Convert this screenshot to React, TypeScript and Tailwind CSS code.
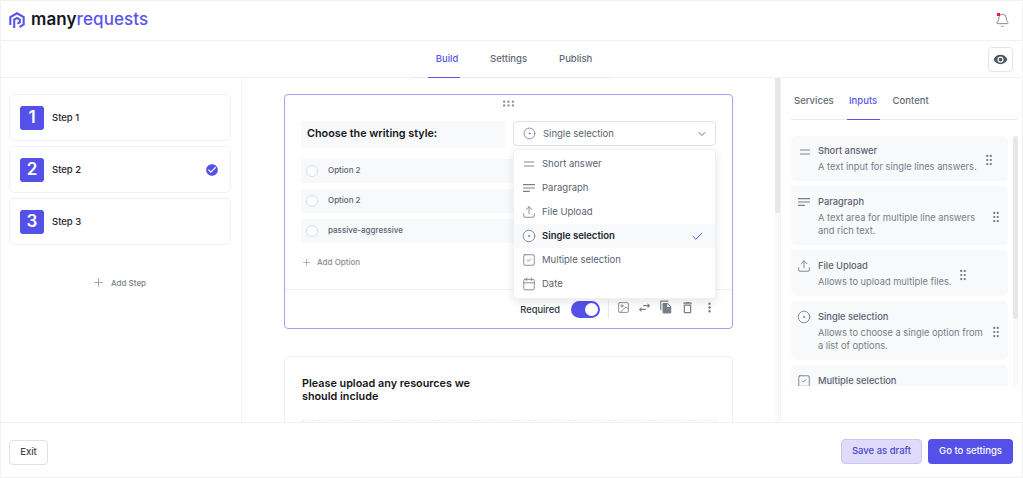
import { Bell, Calendar, Check, ChevronDown, CircleDot, Equal, GripHorizontal, GripVertical, Image, Plus, SquareCheck, Upload } from "lucide-react";
import { MdCheckCircle, MdFileCopy, MdMoreVert, MdOutlineDelete, MdOutlineSwapHoriz, MdRemoveRedEye } from "react-icons/md";
import type { ReactNode } from "react";

function ParagraphIcon({ className }: { className?: string }) {
  return (
    <svg viewBox="0 0 14 14" fill="none" stroke="currentColor" strokeWidth="1.3" className={className}>
      <path d="M0 3h14M0 7h14M0 11h8" />
    </svg>
  );
}

function Logo() {
  return (
    <svg viewBox="0 0 16 17" className="w-4 h-[17px]" fill="none" stroke="#5a55ea" strokeWidth="2.1">
      <path d="M1.3 13V5.2L8 1.3l6.7 3.9v7.3l-4.2 2.6" />
      <path d="M5.2 16V7.6L8 5.9l2.8 1.7v2.7L8.4 11.7" />
    </svg>
  );
}

const menuItems: { label: string; icon: ReactNode; selected?: boolean }[] = [
  { label: "Short answer", icon: <Equal className="w-4 h-4" strokeWidth={1.4} /> },
  { label: "Paragraph", icon: <ParagraphIcon className="w-3 h-[14px]" /> },
  { label: "File Upload", icon: <Upload className="w-[14px] h-[14px]" strokeWidth={1.5} /> },
  { label: "Single selection", icon: <CircleDot className="w-[14px] h-[14px]" strokeWidth={1.5} />, selected: true },
  { label: "Multiple selection", icon: <SquareCheck className="w-[14px] h-[14px]" strokeWidth={1.5} /> },
  { label: "Date", icon: <Calendar className="w-[14px] h-[14px]" strokeWidth={1.5} /> },
];

const inputs: { title: string; desc?: ReactNode; icon: ReactNode; grip?: string; h: string; pt: string }[] = [
  { title: "Short answer", desc: "A text input for single lines answers.", icon: <Equal className="w-4 h-4" strokeWidth={1.4} />, grip: "ml-[5px]", h: "h-[45px]", pt: "pt-2" },
  { title: "Paragraph", desc: <>A text area for multiple line answers<br />and rich text.</>, icon: <ParagraphIcon className="w-3 h-[14px] ml-[1px]" />, grip: "ml-[14px]", h: "h-[59px]", pt: "pt-[9px]" },
  { title: "File Upload", desc: "Allows to upload multiple files.", icon: <Upload className="w-[14px] h-[14px]" strokeWidth={1.5} />, grip: "ml-[5px]", h: "h-[46px]", pt: "pt-[9px]" },
  { title: "Single selection", desc: <>Allows to choose a single option from<br />a list of options.</>, icon: <CircleDot className="w-[14px] h-[14px]" strokeWidth={1.5} />, grip: "ml-[6px]", h: "h-[59px]", pt: "pt-[9px]" },
  { title: "Multiple selection", icon: <SquareCheck className="w-[14px] h-[14px]" strokeWidth={1.5} />, h: "h-[59px]", pt: "pt-[9px]" },
];

function StepCard({ n, active }: { n: number; active?: boolean }) {
  return (
    <div className="h-[47px] rounded-md border border-[#eff0f2] flex items-center pl-[10px] pr-[11px] bg-white">
      <div className="w-6 h-6 rounded-[3px] bg-[#5450e8] text-white text-[17px] font-semibold flex items-center justify-center">{n}</div>
      <span className="ml-2 mt-[2px] text-[9.5px] font-medium text-[#1f2430]">Step {n}</span>
      {active && <MdCheckCircle className="ml-auto w-[14px] h-[14px] text-[#5450e8]" />}
    </div>
  );
}

function OptionRow({ label }: { label: string }) {
  return (
    <div className="h-6 bg-[#f8f9fa] flex items-center pl-[5px]">
      <span className="w-[12px] h-[12px] rounded-full border border-[#d9dce1] bg-white" />
      <span className="ml-[10px] text-[8px] font-medium -translate-y-[1px] text-[#5b6270]">{label}</span>
    </div>
  );
}

export default function App() {
  return (
    <div className="w-[1023px] h-[478px] flex flex-col overflow-hidden bg-white border border-[#f0f1f3] font-['Inter',sans-serif] text-[#4b5563]">
      <header className="h-[40px] shrink-0 flex items-center pl-2 pr-[12px] border-b border-[#f0f1f3]">
        <Logo />
        <span className="ml-[6px] text-[17px] leading-none font-semibold tracking-[0.1px] -translate-y-[1px]">
          <span className="text-[#14161c]">many</span>
          <span className="text-[#5a55ea] font-medium">requests</span>
        </span>
        <span className="ml-auto relative">
          <Bell className="w-[15px] h-[15px] text-[#6b7280]" strokeWidth={1.3} />
          <span className="absolute top-0 left-[2px] w-[3px] h-[3px] bg-[#e5202e]" />
        </span>
      </header>

      <div className="h-[37px] shrink-0 relative flex justify-center items-stretch pr-[1px] border-b border-[#f0f1f3]">
        <nav className="w-[198px] flex border-b border-[#e5e7eb] text-[9.5px] font-medium -mb-[1px]">
          <span className="ml-4 w-8 pl-[6px] flex items-center justify-center text-[#5a55ea] border-b-[1.5px] border-[#5a55ea] -mb-[1px]">Build</span>
          <span className="ml-[30px] flex items-center text-[#626975]">Settings</span>
          <span className="ml-[32px] flex items-center text-[#626975]">Publish</span>
        </nav>
        <button className="absolute right-[9px] top-[6px] w-[25px] h-[25px] rounded-[4px] border border-[#e2e4e8] flex items-center justify-center text-[#4f5662]">
          <MdRemoveRedEye className="w-[15px] h-[15px]" />
        </button>
      </div>

      <main className="flex-1 min-h-0 flex">
        <aside className="w-[241px] shrink-0 border-r border-[#f0f1f3] px-2 pr-[10px] pt-4 flex flex-col gap-[5px]">
          <StepCard n={1} />
          <StepCard n={2} active />
          <StepCard n={3} />
          <div className="mt-[26px] flex items-center justify-center gap-[6px] text-[8px] font-medium text-[#7b818c] pr-[2px]">
            <Plus className="w-[13px] h-[13px] text-[#7b818c]" strokeWidth={1.3} />
            Add Step
          </div>
        </aside>

        <section className="flex-1 min-w-0 flex">
          <div className="flex-1 min-w-0 overflow-hidden pt-4 px-[42px]">
            <div className="h-[235px] w-[449px] rounded-[4px] border border-[#a5a2f5] flex flex-col relative">
              <div className="h-[26px] shrink-0 flex justify-center pt-[1px]">
                <GripHorizontal className="w-[15px] h-[15px] text-[#8b919c]" strokeWidth={1.8} />
              </div>
              <div className="flex pl-4 pr-4 gap-2 items-start">
                <div className="w-[204px] h-[27px] bg-[#f8f9fa] flex items-center pl-[6px] text-[10.8px] font-semibold text-[#14161c]">Choose the writing style:</div>
                <div className="w-[203px] h-[25px] rounded-[4px] border border-[#dfe1e6] flex items-center pl-[9px] pr-[7px] text-[9.5px] text-[#5b6270]">
                  <CircleDot className="w-[13px] h-[13px] text-[#6b7280]" strokeWidth={1.4} />
                  <span className="ml-[7px] pt-[2px]">Single selection</span>
                  <ChevronDown className="ml-auto w-[12px] h-[12px] text-[#6b7280]" />
                </div>
              </div>
              <div className="mt-[11px] px-4 flex flex-col gap-[6px]">
                <OptionRow label="Option 2" />
                <OptionRow label="Option 2" />
                <OptionRow label="passive-aggressive" />
              </div>
              <div className="mt-[13px] pl-4 flex items-center text-[8px] font-medium text-[#868c96]">
                <Plus className="w-[11px] h-[11px]" strokeWidth={1.3} />
                <span className="ml-[5px]">Add Option</span>
              </div>
              <div className="mt-[21px] flex-1 border-t border-[#eef0f2] flex items-start justify-end pr-[15px]">
                <div className="flex items-center h-[38px]">
                  <span className="pt-[2px] text-[9.3px] font-medium text-[#2a2f39] mr-[11px]">Required</span>
                  <span className="w-[29px] h-[17px] rounded-full bg-[#5450e8] flex items-center justify-end pr-[2px]">
                    <span className="w-[13px] h-[13px] rounded-full bg-white" />
                  </span>
                  <span className="ml-2 w-px h-[18px] bg-[#e9ebee]" />
                  <div className="ml-2 flex items-center gap-[7px] text-[#7a808b] -translate-y-[2px]">
                    <Image className="w-[13px] h-[13px]" strokeWidth={1.6} />
                    <MdOutlineSwapHoriz className="w-[15px] h-[15px]" />
                    <MdFileCopy className="w-[14px] h-[14px]" />
                    <MdOutlineDelete className="w-[15px] h-[15px]" />
                    <MdMoreVert className="w-[15px] h-[15px]" />
                  </div>
                </div>
              </div>

              <div className="absolute left-[228px] top-[54px] w-[203px] h-[150px] rounded-[4px] bg-white border border-[#eff0f2] shadow-[0_3px_8px_rgba(0,0,0,0.1)] pt-[2px] z-10">
                {menuItems.map((item) => (
                  <div key={item.label} className={`h-6 flex items-center pr-[11px] text-[9.5px] ${item.selected ? "bg-[#f8f9fa] font-semibold text-[#23272f]" : "text-[#5b6270]"}`}>
                    <span className="w-[28px] flex justify-center pl-[2px] text-[#7a808b]">{item.icon}</span>
                    {item.label}
                    {item.selected && <Check className="ml-auto w-[13px] h-[13px] text-[#5450e8]" strokeWidth={1.8} />}
                  </div>
                ))}
              </div>
            </div>

            <div className="mt-[27px] w-[449px] h-[200px] rounded-[4px] border border-[#eff0f2] pl-[17px] pt-[20px]">
              <h2 className="text-[10.8px] leading-[13px] font-semibold text-[#14161c]">Please upload any resources we<br />should include</h2>
              <div className="mt-[17px] mr-4 h-[60px] border border-dashed border-[#eceef1]" />
            </div>
          </div>
          <div className="w-[5px] shrink-0 bg-[#f8f9fa]">
            <div className="h-[135px] bg-[#e5e7eb] rounded-b-[2px]" />
          </div>
        </section>

        <aside className="w-[242px] shrink-0 border-l border-[#f0f1f3] pl-[10px] flex flex-col">
          <div className="h-[42px] shrink-0 mr-[4px] flex border-b border-[#e9ebee] text-[9.5px] font-medium text-[#626975]">
            <span className="ml-[3px] pt-[5px] flex items-center">Services</span>
            <span className="ml-[13px] pt-[5px] w-[33px] flex items-center justify-center text-[#5a55ea] border-b-[1.5px] border-[#5a55ea] -mb-[1px]">Inputs</span>
            <span className="ml-[13px] pt-[5px] flex items-center">Content</span>
          </div>
          <div className="mt-4 h-[250px] flex overflow-hidden">
            <div className="w-[217px] shrink-0 flex flex-col gap-[5px]">
              {inputs.map((it) => (
                <div key={it.title} className={`${it.h} ${it.pt} shrink-0 rounded-[5px] bg-[#f8f9fa] flex pl-[6px]`}>
                  <span className="w-[21px] shrink-0 flex justify-start text-[#777d88]">{it.icon}</span>
                  <div className="text-[9.3px] leading-[13px] shrink-0">
                    <div className="text-[#5b6270] font-medium mb-[3px]">{it.title}</div>
                    {it.desc && <div className="text-[#777d88] whitespace-nowrap">{it.desc}</div>}
                  </div>
                  {it.grip && <GripVertical className={`${it.grip} self-center -mt-[6px] w-[14px] h-[14px] text-[#6b7280] shrink-0`} strokeWidth={1.8} />}
                </div>
              ))}
            </div>
            <div className="ml-[5px] w-[5px] shrink-0 bg-[#f8f9fa] rounded-[3px]">
              <div className="h-[183px] bg-[#e5e7eb] rounded-[3px]" />
            </div>
          </div>
        </aside>
      </main>

      <footer className="h-[55px] shrink-0 border-t border-[#f0f1f3] flex items-center pl-2 pr-[9px] pt-[2px] text-[9.5px] font-medium">
        <button className="mt-[2px] w-[39px] h-[25px] pt-[1px] rounded-[4px] border border-[#dfe1e6] text-[#3f4550]">Exit</button>
        <button className="ml-auto w-[81px] h-[25px] pt-[1px] rounded-[4px] border border-[#c9c6f7] bg-[#dedcfa] text-[#4a45d0]">Save as draft</button>
        <button className="ml-[6px] w-[85px] h-[25px] pt-[1px] rounded-[4px] bg-[#5450e8] text-white">Go to settings</button>
      </footer>
    </div>
  );
}
